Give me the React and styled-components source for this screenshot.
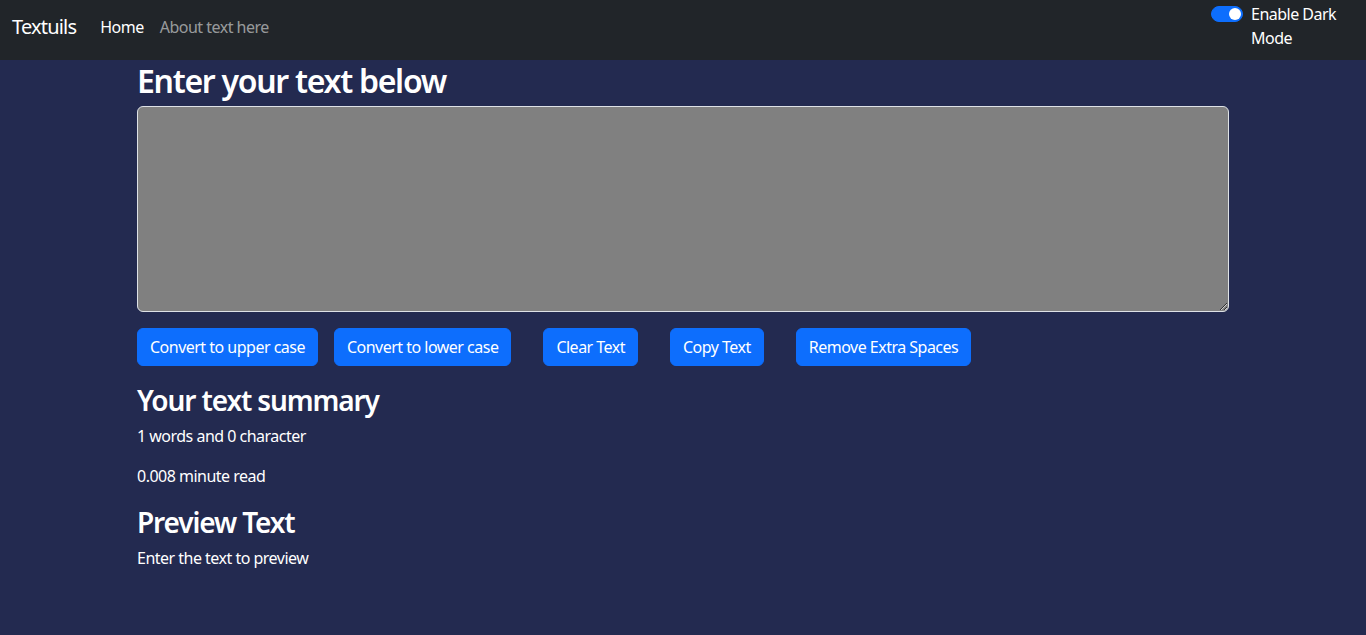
import React, { useState } from "react";
import styled, { createGlobalStyle } from "styled-components";

const GlobalStyle = createGlobalStyle`
  *, *::before, *::after { box-sizing: border-box; }
  body {
    margin: 0;
    background: #232a50;
    color: #fff;
    font-family: "Noto Sans", "Open Sans", sans-serif;
    font-size: 16px;
    line-height: 1.5;
    letter-spacing: -0.032em;
  }
`;

const NavWrapper = styled.nav`
  height: 60px;
  background: #212529;
  padding: 0 12px;
  display: flex;
  align-items: flex-start;
  justify-content: space-between;
`;

const NavLeft = styled.div`
  display: flex;
  align-items: center;
  padding-top: 7px;
`;

const Brand = styled.a`
  font-size: 20px;
  line-height: 30px;
  padding: 5px 0;
  margin-right: 16px;
  color: #fff;
  text-decoration: none;
  letter-spacing: -0.04em;
`;

const NavLink = styled.a`
  padding: 8px;
  line-height: 24px;
  color: ${({ active }) => (active ? "#fff" : "rgba(255, 255, 255, 0.55)")};
  text-decoration: none;
`;

const SwitchWrap = styled.label`
  display: flex;
  align-items: flex-start;
  gap: 8px;
  padding-top: 2px;
  cursor: pointer;
`;

const SwitchTrack = styled.span`
  position: relative;
  flex: none;
  width: 32px;
  height: 16px;
  margin-top: 4px;
  border-radius: 8px;
  background: ${({ on }) => (on ? "#0d6efd" : "transparent")};
  border: 1px solid ${({ on }) => (on ? "#0d6efd" : "#dee2e6")};
  &::after {
    content: "";
    position: absolute;
    top: 1px;
    left: ${({ on }) => (on ? "17px" : "1px")};
    width: 12px;
    height: 12px;
    border-radius: 50%;
    background: ${({ on }) => (on ? "#fff" : "#dee2e6")};
  }
`;

const SwitchLabel = styled.span`
  max-width: 103px;
  line-height: 24px;
  color: #fff;
`;

const Container = styled.div`
  width: 1092px;
  margin: 0 auto;
`;

const Heading = styled.h2`
  font-size: ${({ size }) => size}px;
  font-weight: 600;
  line-height: 1.2;
  letter-spacing: -0.04em;
  margin: ${({ top }) => top}px 0 6px;
`;

const TextBox = styled.textarea`
  display: block;
  width: 100%;
  height: 206px;
  padding: 6px 12px;
  margin-bottom: 16px;
  background: #808080;
  color: #fff;
  border: 1px solid #dee2e6;
  border-radius: 6px;
  font: inherit;
`;

const ButtonRow = styled.div`
  display: flex;
  margin-bottom: 18px;
`;

const Button = styled.button`
  margin-left: ${({ gap }) => gap}px;
  padding: 6px 12px;
  height: 38px;
  background: #0d6efd;
  color: #fff;
  border: 1px solid #0d6efd;
  border-radius: 6px;
  font: inherit;
  letter-spacing: -0.032em;
  line-height: 24px;
  cursor: pointer;
`;

const Text = styled.p`
  margin: 0 0 16px;
`;

const buttons = [
  ["Convert to upper case", 0],
  ["Convert to lower case", 16],
  ["Clear Text", 32],
  ["Copy Text", 32],
  ["Remove Extra Spaces", 32],
];

export default function App() {
  const [dark, setDark] = useState(true);
  const [text, setText] = useState("");

  return (
    <>
      <GlobalStyle />
      <NavWrapper>
        <NavLeft>
          <Brand href="#">Textuils</Brand>
          <NavLink href="#" active>
            Home
          </NavLink>
          <NavLink href="#">About text here</NavLink>
        </NavLeft>
        <SwitchWrap onClick={() => setDark(!dark)}>
          <SwitchTrack on={dark ? 1 : 0} />
          <SwitchLabel>Enable Dark Mode</SwitchLabel>
        </SwitchWrap>
      </NavWrapper>

      <Container>
        <Heading size={32} top={2}>
          Enter your text below
        </Heading>
        <TextBox value={text} onChange={(e) => setText(e.target.value)} />
        <ButtonRow>
          {buttons.map(([label, gap]) => (
            <Button key={label} gap={gap}>
              {label}
            </Button>
          ))}
        </ButtonRow>
      </Container>

      <Container>
        <Heading size={28} top={0}>
          Your text summary
        </Heading>
        <Text>1 words and {text.length} character</Text>
        <Text>0.008 minute read</Text>
        <Heading size={28} top={18}>
          Preview Text
        </Heading>
        <Text>{text.length > 0 ? text : "Enter the text to preview"}</Text>
      </Container>
    </>
  );
}
